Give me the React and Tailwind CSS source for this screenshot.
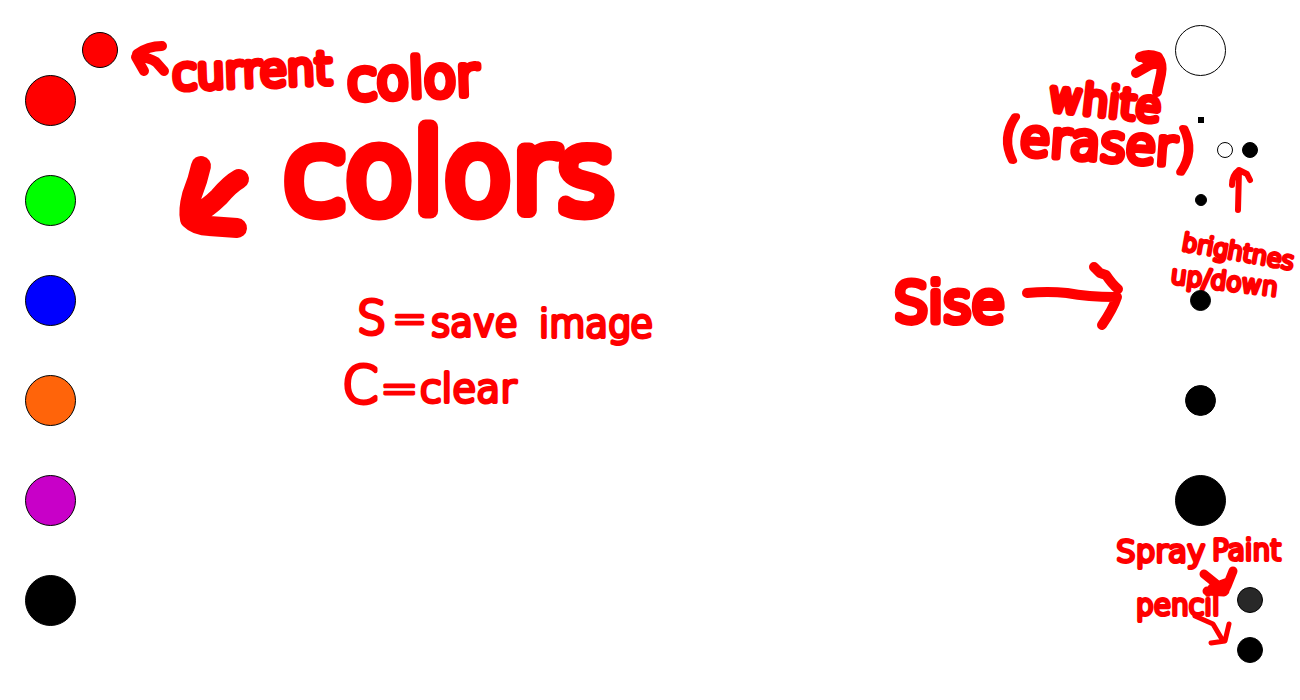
import { useState } from "react";

const COLORS = [
  { name: "Red", fill: "bg-[#ff0000]" },
  { name: "Green", fill: "bg-[#00ff00]" },
  { name: "Blue", fill: "bg-[#0000ff]" },
  { name: "Orange", fill: "bg-[#ff640a]" },
  { name: "Purple", fill: "bg-[#c800c8]" },
  { name: "Black", fill: "bg-black" },
];

const SIZES = [
  { name: "Size 1", row: "mt-[29px] h-[30px]", dot: "size-1.5 rounded-none" },
  { name: "Size 2", row: "h-[70px]", dot: "size-3 rounded-full" },
  { name: "Size 3", row: "h-[130px]", dot: "size-[21px] rounded-full" },
  { name: "Size 4", row: "h-[70px]", dot: "size-[31px] rounded-full" },
  { name: "Size 5", row: "h-[130px]", dot: "size-[51px] rounded-full" },
];

function Dot({ label, className, onClick }) {
  return (
    <button
      type="button"
      aria-label={label}
      onClick={onClick}
      className={`block shrink-0 cursor-pointer border border-black ${className}`}
    />
  );
}

function SizeRow({ size, onPick }) {
  return (
    <div className={`flex items-center ${size.row}`}>
      <div className="flex w-[51px] justify-center">
        <Dot label={size.name} className={`bg-black ${size.dot}`} onClick={() => onPick(size.name)} />
      </div>
    </div>
  );
}

// A word written with a round marker: x/y is the start of its baseline.
function Word({ x, y, size, ink, turn = 0, children }) {
  return (
    <text
      x={x}
      y={y}
      fontSize={size}
      strokeWidth={ink}
      transform={turn ? `rotate(${turn} ${x} ${y})` : undefined}
      fill="#ff0000"
    >
      {children}
    </text>
  );
}

function Ink({ className, viewBox, children }) {
  return (
    <svg
      className={`pointer-events-none absolute top-0 h-[700px] font-['DejaVu_Sans',sans-serif] font-extralight ${className}`}
      viewBox={viewBox}
      fill="none"
      stroke="#ff0000"
      strokeLinecap="round"
      strokeLinejoin="round"
    >
      {children}
    </svg>
  );
}

function LeftNotes() {
  return (
    <Ink className="left-0 w-[700px]" viewBox="0 0 700 700">
      <path strokeWidth="10" d="M162 46 Q148 46 137 54 M136 57 L144 71 M137 56 Q150 58 156 62 L164 71" />
      <Word x={173} y={89} size={44} ink={7} turn={-2}>current</Word>
      <Word x={348} y={99} size={53} ink={8} turn={-2}>color</Word>
      <path strokeWidth="20" d="M201 166 Q198 180 192 195 Q188 210 190 219 Q197 226 209 226 L237 228 M239 179 Q230 184 219 197 Q208 208 192 217" />
      <Word x={284} y={211} size={111} ink={15}>colors</Word>
      <Word x={357} y={334} size={46} ink={4}>S</Word>
      <Word x={392} y={333} size={42} ink={3}>=</Word>
      <Word x={431} y={336} size={37} ink={4}>save</Word>
      <Word x={539} y={337} size={37} ink={4}>image</Word>
      <Word x={342} y={403} size={52} ink={4}>C</Word>
      <Word x={380} y={404} size={46} ink={3}>=</Word>
      <Word x={420} y={402} size={39} ink={4}>clear</Word>
    </Ink>
  );
}

function RightNotes() {
  return (
    <Ink className="right-0 w-[420px]" viewBox="880 0 420 700">
      <path strokeWidth="10" d="M1140 57 Q1148 53 1158 57 Q1163 64 1161 74 L1157 92 M1136 73 L1150 65 Q1157 63 1156 57 M1144 58 L1156 64" />
      <Word x={1048} y={110} size={41} ink={7} turn={6}>white</Word>
      <Word x={1000} y={153} size={49} ink={7} turn={4}>(eraser)</Word>

      <path strokeWidth="6" d="M1238 210 L1239 170 M1232 185 Q1232 175 1239 170 L1247 174 L1250 180" />
      <Word x={1181} y={250} size={24} ink={4} turn={10}>brightnes</Word>
      <Word x={1170} y={283} size={25} ink={4} turn={7}>up/down</Word>

      <Word x={894} y={321} size={54} ink={8}>Sise</Word>
      <path strokeWidth="10" d="M1027 293 Q1048 291 1067 293 Q1088 297 1115 297 M1094 267 L1100 273 L1106 275 Q1112 284 1118 289 M1117 297 Q1113 309 1102 325" />

      <Word x={1116} y={562} size={31} ink={4}>Spray</Word>
      <Word x={1212} y={560} size={28} ink={4}>Paint</Word>
      <path strokeWidth="9" d="M1204 574 L1225 591 M1233 571 L1227 586 L1224 592 L1207 591 M1212 588 L1228 582" />
      <Word x={1136} y={615} size={28} ink={4}>pencil</Word>
      <path strokeWidth="5" d="M1195 616 L1213 624 L1223 641 M1229 624 L1225 641 L1211 643" />
    </Ink>
  );
}

export default function App() {
  const [color, setColor] = useState(COLORS[0]);
  const [, setBrush] = useState("Size 3");

  return (
    <main className="relative flex min-h-screen items-start justify-between bg-white">
      <LeftNotes />
      <RightNotes />

      <section aria-label="Colors" className="relative flex gap-1.5 pl-[25px]">
        <div className="flex flex-col gap-[49px] pt-[75px]">
          {COLORS.map((c) => (
            <Dot key={c.name} label={c.name} className={`size-[51px] rounded-full ${c.fill}`} onClick={() => setColor(c)} />
          ))}
        </div>
        <div role="img" aria-label="Current color" className={`mt-8 size-9 rounded-full border border-black ${color.fill}`} />
      </section>

      <section aria-label="Brushes" className="relative w-[125px] pt-[25px]">
        <Dot label="White (eraser)" className="size-[51px] rounded-full bg-white" onClick={() => setBrush("Eraser")} />
        <SizeRow size={SIZES[0]} onPick={setBrush} />
        <div className="flex h-[30px] items-center gap-[9px] pl-[42px]">
          <Dot label="Brightness up" className="size-4 rounded-full bg-white" />
          <Dot label="Brightness down" className="size-4 rounded-full bg-black" />
        </div>
        {SIZES.slice(1).map((s) => (
          <SizeRow key={s.name} size={s} onPick={setBrush} />
        ))}
        <div className="mt-[22px] flex flex-col gap-6 pl-[62px]">
          <Dot label="Spray paint" className="size-[26px] rounded-full bg-[#282828]" onClick={() => setBrush("Spray")} />
          <Dot label="Pencil" className="size-[26px] rounded-full bg-black" onClick={() => setBrush("Pencil")} />
        </div>
      </section>
    </main>
  );
}
